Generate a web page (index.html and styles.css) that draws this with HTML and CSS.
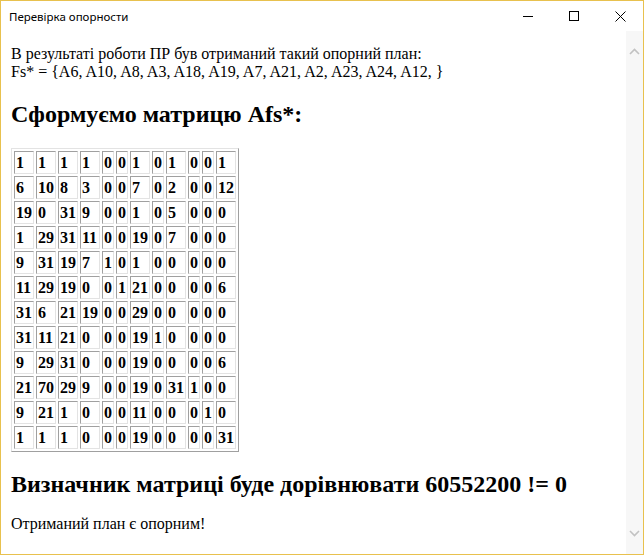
FILE: index.html
```html
<!DOCTYPE html>
<html>
<head>
<meta charset="utf-8">
<link rel="stylesheet" href="styles.css">
</head>
<body>
<div class="window">
  <div class="titlebar">
    <span class="title">Перевірка опорности</span>
    <div class="controls">
      <span class="ctl"><svg width="10" height="10" viewBox="0 0 10 10"><path d="M0 5.5H10" stroke="#000" stroke-width="1"/></svg></span>
      <span class="ctl"><svg width="10" height="10" viewBox="0 0 10 10"><rect x="0.5" y="0.5" width="9" height="9" fill="none" stroke="#000" stroke-width="1"/></svg></span>
      <span class="ctl"><svg width="11" height="11" viewBox="0 0 11 11"><path d="M0.5 0.5L10.5 10.5M10.5 0.5L0.5 10.5" stroke="#000" stroke-width="1"/></svg></span>
    </div>
  </div>
  <div class="client">
    <div class="page">
      <div class="intro">В результаті роботи ПР був отриманий такий опорний план:<br>Fs* = {A6, A10, A8, A3, A18, A19, A7, A21, A2, A23, A24, A12, }</div>
      <h2>Сформуємо матрицю Afs*:</h2>
      <table class="matrix">
        <tr><td>1</td><td>1</td><td>1</td><td>1</td><td>0</td><td>0</td><td>1</td><td>0</td><td>1</td><td>0</td><td>0</td><td>1</td></tr>
        <tr><td>6</td><td>10</td><td>8</td><td>3</td><td>0</td><td>0</td><td>7</td><td>0</td><td>2</td><td>0</td><td>0</td><td>12</td></tr>
        <tr><td>19</td><td>0</td><td>31</td><td>9</td><td>0</td><td>0</td><td>1</td><td>0</td><td>5</td><td>0</td><td>0</td><td>0</td></tr>
        <tr><td>1</td><td>29</td><td>31</td><td>11</td><td>0</td><td>0</td><td>19</td><td>0</td><td>7</td><td>0</td><td>0</td><td>0</td></tr>
        <tr><td>9</td><td>31</td><td>19</td><td>7</td><td>1</td><td>0</td><td>1</td><td>0</td><td>0</td><td>0</td><td>0</td><td>0</td></tr>
        <tr><td>11</td><td>29</td><td>19</td><td>0</td><td>0</td><td>1</td><td>21</td><td>0</td><td>0</td><td>0</td><td>0</td><td>6</td></tr>
        <tr><td>31</td><td>6</td><td>21</td><td>19</td><td>0</td><td>0</td><td>29</td><td>0</td><td>0</td><td>0</td><td>0</td><td>0</td></tr>
        <tr><td>31</td><td>11</td><td>21</td><td>0</td><td>0</td><td>0</td><td>19</td><td>1</td><td>0</td><td>0</td><td>0</td><td>0</td></tr>
        <tr><td>9</td><td>29</td><td>31</td><td>0</td><td>0</td><td>0</td><td>19</td><td>0</td><td>0</td><td>0</td><td>0</td><td>6</td></tr>
        <tr><td>21</td><td>70</td><td>29</td><td>9</td><td>0</td><td>0</td><td>19</td><td>0</td><td>31</td><td>1</td><td>0</td><td>0</td></tr>
        <tr><td>9</td><td>21</td><td>1</td><td>0</td><td>0</td><td>0</td><td>11</td><td>0</td><td>0</td><td>0</td><td>1</td><td>0</td></tr>
        <tr><td>1</td><td>1</td><td>1</td><td>0</td><td>0</td><td>0</td><td>19</td><td>0</td><td>0</td><td>0</td><td>0</td><td>31</td></tr>
      </table>
      <h2 class="det">Визначник матриці буде дорівнювати 60552200 != 0</h2>
      <p class="result">Отриманий план є опорним!</p>
    </div>
    <div class="scrollbar">
      <svg class="arrow" width="11" height="7" viewBox="0 0 11 7"><polyline points="1,6 5.5,1.5 10,6" fill="none" stroke="#c2c2c2" stroke-width="1.6"/></svg>
      <svg class="arrow" width="11" height="7" viewBox="0 0 11 7"><polyline points="1,1 5.5,5.5 10,1" fill="none" stroke="#c2c2c2" stroke-width="1.6"/></svg>
    </div>
  </div>
</div>
</body>
</html>
```

FILE: styles.css
```css
html, body {
  margin: 0;
  padding: 0;
  background: #ffffff;
}

.window {
  width: 644px;
  height: 555px;
  box-sizing: border-box;
  border: 1px solid #e8c14e;
  display: flex;
  flex-direction: column;
  background: #ffffff;
  overflow: hidden;
}

.titlebar {
  height: 30px;
  flex: none;
  display: flex;
  align-items: center;
  justify-content: space-between;
  background: #ffffff;
}

.title {
  font-family: "Noto Sans", sans-serif;
  font-size: 11.5px;
  color: #000000;
  padding-left: 8px;
}

.controls {
  display: flex;
  height: 30px;
}

.ctl {
  width: 46px;
  height: 30px;
  display: flex;
  align-items: center;
  justify-content: center;
}

.client {
  flex: 1;
  display: flex;
  min-height: 0;
}

.page {
  flex: 1;
  padding: 14px 10px 0 10px;
  font-family: "Liberation Serif", "Times New Roman", serif;
  font-size: 16px;
  color: #000000;
  overflow: hidden;
}

.intro {
  margin: 0;
}

h2 {
  font-size: 24px;
  font-weight: bold;
  margin: 20px 0;
}

h2.det {
  margin: 19px 0 17px 0;
}

.matrix {
  border-collapse: separate;
  border-spacing: 2px;
  border-style: solid;
  border-width: 1px;
  border-color: #e3e3e3 #a0a0a0 #a0a0a0 #e3e3e3;
}

.matrix td {
  padding: 1px;
  font-weight: bold;
  line-height: 19px;
  border-style: solid;
  border-width: 1px;
  border-color: #a0a0a0 #e3e3e3 #e3e3e3 #a0a0a0;
  text-align: left;
  vertical-align: middle;
}

.result {
  margin: 0;
}

.scrollbar {
  width: 17px;
  flex: none;
  background: #f7f7f7;
  display: flex;
  flex-direction: column;
  justify-content: space-between;
  align-items: center;
  padding: 17px 0 17px 0;
  box-sizing: border-box;
}
```
